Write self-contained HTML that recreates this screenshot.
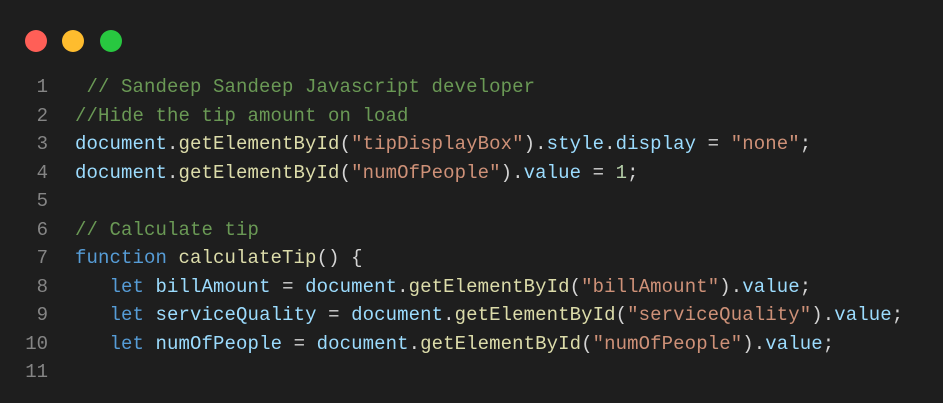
<!DOCTYPE html>
<html><head><style>
body{margin:0;width:943px;height:403px;background:#1e1e1e;overflow:hidden}
.dot{position:absolute;top:30px;width:22px;height:22px;border-radius:50%}
.code{position:absolute;left:0;top:73px;font-family:"Liberation Mono",monospace;font-size:19px;letter-spacing:0.1px;line-height:28.5px;color:#d4d4d4;white-space:pre}
.ln{display:inline-block;width:48px;text-align:right;color:#858585;margin-right:27px;letter-spacing:0}
.c{color:#6a9955}.v{color:#9cdcfe}.f{color:#dcdcaa}.s{color:#ce9178}.k{color:#569cd6}.n{color:#b5cea8}
</style></head><body>
<div class="dot" style="left:25px;background:#ff5f57"></div>
<div class="dot" style="left:62px;background:#febc2e"></div>
<div class="dot" style="left:100px;background:#28c840"></div>
<div class="code"><div><span class="ln">1</span><span class="c"> // Sandeep Sandeep Javascript developer</span></div><div><span class="ln">2</span><span class="c">//Hide the tip amount on load</span></div><div><span class="ln">3</span><span class="v">document</span>.<span class="f">getElementById</span>(<span class="s">"tipDisplayBox"</span>).<span class="v">style</span>.<span class="v">display</span> = <span class="s">"none"</span>;</div><div><span class="ln">4</span><span class="v">document</span>.<span class="f">getElementById</span>(<span class="s">"numOfPeople"</span>).<span class="v">value</span> = <span class="n">1</span>;</div><div><span class="ln">5</span></div><div><span class="ln">6</span><span class="c">// Calculate tip</span></div><div><span class="ln">7</span><span class="k">function</span> <span class="f">calculateTip</span>() {</div><div><span class="ln">8</span>   <span class="k">let</span> <span class="v">billAmount</span> = <span class="v">document</span>.<span class="f">getElementById</span>(<span class="s">"billAmount"</span>).<span class="v">value</span>;</div><div><span class="ln">9</span>   <span class="k">let</span> <span class="v">serviceQuality</span> = <span class="v">document</span>.<span class="f">getElementById</span>(<span class="s">"serviceQuality"</span>).<span class="v">value</span>;</div><div><span class="ln">10</span>   <span class="k">let</span> <span class="v">numOfPeople</span> = <span class="v">document</span>.<span class="f">getElementById</span>(<span class="s">"numOfPeople"</span>).<span class="v">value</span>;</div><div><span class="ln">11</span></div></div>
</body></html>
